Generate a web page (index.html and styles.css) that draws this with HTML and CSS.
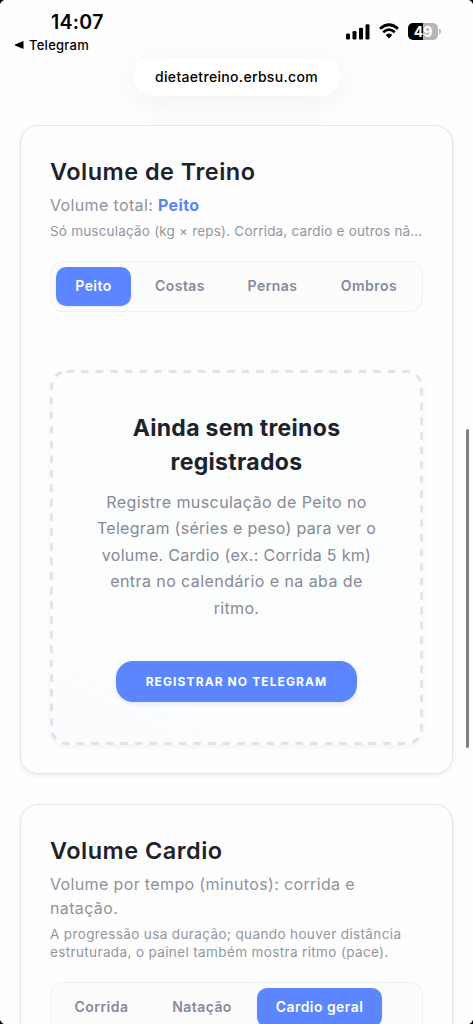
FILE: index.html
```html
<!DOCTYPE html>
<html lang="pt-BR">
<head>
<meta charset="utf-8">
<meta name="viewport" content="width=device-width, initial-scale=1">
<title>Volume de Treino</title>
<link rel="stylesheet" href="styles.css">
</head>
<body>
<div class="screen">
  <header class="top">
    <div class="status">
      <div class="clock">
        <span class="time">14:07</span>
        <span class="back"><svg width="9" height="8" viewBox="0 0 9 8"><path d="M8.5 0v8L0 4.6v-1.2z"/></svg><span class="back-label">Telegram</span></span>
      </div>
      <div class="indicators">
        <svg class="signal" width="25" height="16" viewBox="0 0 25 16"><rect x="0" y="9.5" width="4" height="6" rx="1.3"/><rect x="6.5" y="7" width="4" height="8.5" rx="1.3"/><rect x="13" y="3.7" width="4" height="11.8" rx="1.3"/><rect x="19.5" y="0.3" width="4" height="15.2" rx="1.3"/></svg>
        <svg class="wifi" width="20" height="16" viewBox="0 0 20 16"><g fill="none" stroke="#000" stroke-width="2.7"><path d="M1 5.8Q10-2.3 19 5.8"/><path d="M4.2 9.3Q10 4.1 15.8 9.3"/></g><path d="M6.7 11.9Q10 9.2 13.3 11.9L10 15.5z"/></svg>
        <div class="battery"><span class="battery-level">49</span><i class="battery-cap"></i></div>
      </div>
    </div>
    <div class="address"><span class="host">dietaetreino.erbsu.com</span></div>
  </header>

  <main class="cards">
    <section class="card">
      <h2 class="title">Volume de Treino</h2>
      <p class="subtitle">Volume total: <b class="accent">Peito</b></p>
      <p class="note">Só musculação (kg × reps). Corrida, cardio e outros nã…</p>
      <nav class="tabs">
        <button class="tab active w-peito">Peito</button>
        <button class="tab w-costas">Costas</button>
        <button class="tab w-pernas">Pernas</button>
        <button class="tab w-ombros">Ombros</button>
      </nav>
      <div class="empty">
        <svg class="dashes" width="373" height="375" viewBox="0 0 373 375"><rect x="1.5" y="1.5" width="370" height="372" rx="15"/></svg>
        <h3 class="empty-title">Ainda sem treinos<br>registrados</h3>
        <p class="empty-text"><span class="wide">Registre musculação de Peito no</span><br>Telegram (séries e peso) para ver o<br>volume. Cardio (ex.: Corrida 5 km)<br><span class="wide">entra no calendário e na aba de</span><br>ritmo.</p>
        <button class="cta">REGISTRAR NO TELEGRAM</button>
      </div>
    </section>

    <section class="card">
      <h2 class="title">Volume Cardio</h2>
      <p class="subtitle">Volume por tempo (minutos): corrida e<br>natação.</p>
      <p class="note loose">A progressão usa duração; quando houver distância<br>estruturada, o painel também mostra ritmo (pace).</p>
      <nav class="tabs">
        <button class="tab w-corrida">Corrida</button>
        <button class="tab w-natacao">Natação</button>
        <button class="tab active w-cardio">Cardio geral</button>
      </nav>
    </section>
  </main>

  <div class="scrollbar"></div>
  <svg class="corner tl" width="5" height="5" viewBox="0 0 5 5"><path d="M0 0h4Q1.2 1 0 4z"/></svg>
  <svg class="corner tr" width="5" height="5" viewBox="0 0 5 5"><path d="M0 0h4Q1.2 1 0 4z"/></svg>
  <svg class="corner bl" width="5" height="5" viewBox="0 0 5 5"><path d="M0 0h4Q1.2 1 0 4z"/></svg>
  <svg class="corner br" width="5" height="5" viewBox="0 0 5 5"><path d="M0 0h4Q1.2 1 0 4z"/></svg>
</div>
</body>
</html>
```
FILE: styles.css
```css
* { box-sizing: border-box; }
html, body { margin: 0; height: 100%; overflow: hidden; }
body { background: #fefefe; font-family: Inter, "Open Sans", sans-serif; color: #1e222d; }
h2, h3, p { margin: 0; font-weight: 400; }
button { border: 0; margin: 0; padding: 0; font-family: inherit; background: none; white-space: nowrap; }

.screen { position: relative; height: 1024px; overflow: hidden; }

.top { height: 125px; color: #000; }
.status { display: flex; justify-content: space-between; height: 56px; }
.clock { display: flex; flex-direction: column; padding: 10px 0 0 15px; }
.time { padding-left: 36px; font-size: 19.5px; line-height: 24px; font-weight: 600; letter-spacing: 0.3px; }
.back { display: flex; align-items: center; gap: 5px; height: 22px; font-size: 13px; font-weight: 500; letter-spacing: 0.25px; }
.indicators { display: flex; align-items: flex-start; padding: 23px 35px 0 0; }
.wifi { margin-left: 8px; }
.signal { margin-top: 1px; }
.battery { position: relative; width: 30px; height: 17px; margin-left: 9px; border-radius: 5px; background: linear-gradient(90deg, #000 50%, #b7b7b7 50%); color: #fff; text-align: center; font-size: 14px; line-height: 17px; font-weight: 700; }
.battery-cap { position: absolute; left: 31px; top: 6px; width: 2px; height: 5px; border-radius: 0 2px 2px 0; background: #b7b7b7; }
.address { width: 207px; height: 39px; margin: 1px auto 0; display: flex; align-items: center; justify-content: center; border-radius: 20px; background: #fff; box-shadow: 0 6px 32px rgba(0, 0, 0, 0.06); font-size: 14px; font-weight: 500; }
.host { letter-spacing: 0.32px; white-space: nowrap; }

.cards { position: relative; display: flex; flex-direction: column; gap: 30px; padding: 0 20px; }
.card { flex: none; padding: 30px 29px 28px; border: 1px solid #e2e5ea; border-radius: 18px; background: #fefefe; box-shadow: 0 2px 4px rgba(20, 30, 50, 0.07); }
.title { font-size: 23.5px; line-height: 31px; font-weight: 600; letter-spacing: 0.48px; white-space: nowrap; }
.subtitle { margin-top: 6px; font-size: 16px; line-height: 24px; letter-spacing: 0.36px; color: #8e929e; white-space: nowrap; }
.accent { color: #5b83f3; font-weight: 700; }
.note { margin-top: 5px; font-size: 13.5px; line-height: 18.5px; letter-spacing: 0.2px; color: #92969f; white-space: nowrap; }
.loose { letter-spacing: 0.37px; }
.tabs { display: flex; gap: 6px; height: 51px; margin-top: 20px; padding: 5px; border: 1px solid #f0f1f4; border-radius: 13px; background: #fcfcfd; }
.tab { flex: none; height: 39px; padding-bottom: 2px; border-radius: 10px; font-size: 14px; font-weight: 600; letter-spacing: 0.45px; color: #858a9b; }
.active { background: #5b86ff; color: #fff; box-shadow: 0 1px 3px rgba(80, 120, 240, 0.12); }
.w-peito { width: 75px; }
.w-costas { width: 86px; }
.w-pernas { width: 87px; }
.w-ombros { width: 94px; }
.w-corrida { width: 91px; }
.w-natacao { width: 98px; }
.w-cardio { width: 125px; }

.empty { position: relative; height: 375px; margin-top: 58px; padding-top: 41px; display: flex; flex-direction: column; align-items: center; border-radius: 16px; background: linear-gradient(25deg, #f9fbfe 0%, #fcfdfd 20%, #fcfdfd 100%); box-shadow: 0 2px 5px rgba(20, 30, 50, 0.05); text-align: center; white-space: nowrap; }
.dashes { position: absolute; left: 0; top: 0; }
.dashes rect { fill: none; stroke: #e1e3e6; stroke-width: 2.8; stroke-dasharray: 7.6 7; }
.empty-title { font-size: 23px; line-height: 34px; font-weight: 700; letter-spacing: 0.3px; }
.empty-text { margin-top: 10px; font-size: 16px; line-height: 26.6px; letter-spacing: 0.3px; color: #858998; }
.wide { letter-spacing: 0.43px; }
.cta { width: 241px; height: 41px; margin-top: 40px; border-radius: 17px; background: #5b86ff; box-shadow: 0 2px 4px rgba(60, 90, 190, 0.13); color: #fff; font-size: 12px; font-weight: 700; letter-spacing: 1.1px; }

.scrollbar { position: absolute; right: 4px; top: 429px; width: 3px; height: 319px; border-radius: 2px; background: #7f7f7f; }
.corner { position: absolute; }
.tl { left: 0; top: 0; }
.tr { right: 0; top: 0; transform: scaleX(-1); }
.bl { left: 0; bottom: 0; transform: scaleY(-1); }
.br { right: 0; bottom: 0; transform: scale(-1, -1); }
```
